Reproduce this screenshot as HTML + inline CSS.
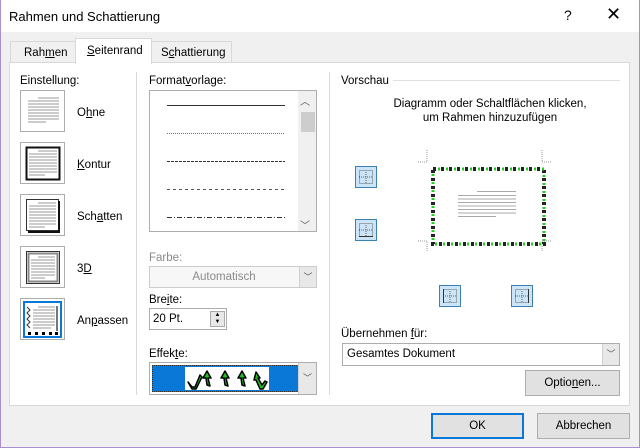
<!DOCTYPE html><html><head><meta charset="utf-8"><style>
*{box-sizing:border-box}body{margin:0;width:640px;height:448px;background:#f0f0f0;font-family:"Liberation Sans",sans-serif;font-size:11.5px;color:#000;position:relative;overflow:hidden}
.a{position:absolute}
.win{left:0;top:0;width:640px;height:448px;border:1px solid #a78fd0;border-top:none}
.tb{left:1px;top:0;width:638px;height:32px;background:#fff}
.u{text-decoration:underline}
.box{border:1px solid #adadad;background:#fff}
.ic{position:absolute;left:20px;width:45px;height:42px;border:1px solid #adadad;background:#fff}
.lbl{position:absolute;left:77px}
.dd{position:absolute;right:0;top:0;bottom:0;width:17px;background:#e8e8e8;border-left:1px solid #d0d0d0;text-align:center;color:#555;font-size:9px}
.btn{position:absolute;background:#e1e1e1;border:1px solid #adadad;text-align:center}
.sb{position:absolute;width:22px;height:22px;background:#cce4f7;border:1px solid #3c7fb1}
.sb svg{position:absolute;left:2px;top:2px}
</style></head><body>
<div class="a win"></div>
<div class="a tb"></div>
<div class="a" style="left:9px;top:9px;font-size:13px">Rahmen und Schattierung</div>
<div class="a" style="left:564px;top:7px;font-size:14px">?</div>
<div class="a" style="left:606px;top:4px;font-size:18px">✕</div>
<div class="a" style="left:10px;top:41px;width:66px;height:22px;border:1px solid #d9d9d9;border-bottom:none;background:#f0f0f0"></div>
<div class="a" style="left:24px;top:47px">Rah<span class="u">m</span>en</div>
<div class="a" style="left:151px;top:41px;width:81px;height:22px;border:1px solid #d9d9d9;border-bottom:none;background:#f0f0f0"></div>
<div class="a" style="left:161px;top:47px">S<span class="u">c</span>hattierung</div>
<div class="a" style="left:9px;top:62px;width:621px;height:344px;background:#fff;border:1px solid #d9d9d9"></div>
<div class="a" style="left:75px;top:38px;width:77px;height:26px;background:#fff;border:1px solid #d9d9d9;border-bottom:none"></div>
<div class="a" style="left:87px;top:45px"><span class="u">S</span>eitenrand</div>
<div class="a" style="left:20px;top:75px">Einstellung:</div>
<div class="a" style="left:136px;top:72px;width:1px;height:323px;background:#d9d9d9"></div>
<div class="a" style="left:329px;top:72px;width:1px;height:323px;background:#d9d9d9"></div>
<div class="ic" style="top:90px"><svg width="43" height="40"><g stroke="#999" stroke-width="1"><path d="M17 7h21M7 10h31M7 13h31M7 16h31M7 19h31M7 22h31M7 25h31M7 28h31M7 31h18"/></g></svg></div>
<div class="lbl" style="top:107px">O<span class="u">h</span>ne</div>
<div class="ic" style="top:142px"><svg width="43" height="40"><rect x="5.5" y="4.5" width="33" height="32" fill="none" stroke="#111" stroke-width="2"/><g stroke="#999"><path d="M17 8h19M8 11h28M8 14h28M8 17h28M8 20h28M8 23h28M8 26h28M8 29h28M8 32h16"/></g></svg></div>
<div class="lbl" style="top:159px"><span class="u">K</span>ontur</div>
<div class="ic" style="top:194px"><svg width="43" height="40"><rect x="5.5" y="4.5" width="32" height="31" fill="none" stroke="#333"/><path d="M38 6v31H7" fill="none" stroke="#111" stroke-width="2"/><g stroke="#999"><path d="M17 8h18M8 11h27M8 14h27M8 17h27M8 20h27M8 23h27M8 26h27M8 29h27M8 32h16"/></g></svg></div>
<div class="lbl" style="top:211px">Sch<span class="u">a</span>tten</div>
<div class="ic" style="top:246px"><svg width="43" height="40"><rect x="5.5" y="4.5" width="33" height="32" fill="none" stroke="#333"/><rect x="7.5" y="6.5" width="29" height="28" fill="none" stroke="#888" stroke-width="2"/><g stroke="#999"><path d="M17 10h17M10 13h24M10 16h24M10 19h24M10 22h24M10 25h24M10 28h24M10 31h14"/></g></svg></div>
<div class="lbl" style="top:263px">3<span class="u">D</span></div>
<div class="ic" style="top:298px"><svg width="43" height="40"><rect x="3" y="3" width="37" height="35" fill="none" stroke="#0a78d7" stroke-width="2"/><path d="M6 8l3 3-3 3 3 3-3 3 3 3-3 3 3 3" fill="none" stroke="#333"/><path d="M36 7v25" stroke="#777" stroke-width="2"/><g stroke="#999"><path d="M17 8h17M12 11h22M12 14h22M12 17h22M12 20h22M12 23h22M12 26h22M12 29h18"/></g><g fill="#000"><rect x="7" y="33" width="3" height="3"/><rect x="14" y="33" width="3" height="3"/><rect x="21" y="33" width="3" height="3"/><rect x="28" y="33" width="3" height="3"/><rect x="34" y="33" width="3" height="3"/></g></svg></div>
<div class="lbl" style="top:315px">An<span class="u">p</span>assen</div>
<div class="a" style="left:149px;top:75px">Format<span class="u">v</span>orlage:</div>
<div class="a box" style="left:149px;top:90px;width:168px;height:142px"><svg width="166" height="140" style="position:absolute;left:0;top:0"><g stroke="#333" fill="none"><path d="M17 14.5h118"/><path d="M17 42.5h118" stroke-dasharray="1 1" stroke="#777"/><path d="M17 70.5h118" stroke-dasharray="3 1"/><path d="M17 98.5h118" stroke-dasharray="3 3" stroke="#555"/><path d="M17 126.5h118" stroke-dasharray="5 2 1 2"/></g></svg>
<div class="a" style="left:148px;top:0;width:18px;height:140px;background:#f0f0f0"></div>
<div class="a" style="left:151px;top:21px;width:14px;height:20px;background:#cdcdcd"></div>
<div class="a" style="left:150px;top:2px;font-size:10px;color:#555">︿</div>
<div class="a" style="left:150px;top:126px;font-size:10px;color:#555">﹀</div></div>
<div class="a" style="left:149px;top:252px;color:#8a8a8a">Farbe:</div>
<div class="a box" style="left:149px;top:266px;width:168px;height:22px;border-color:#ccc;background:#f7f7f7;color:#8a8a8a;text-align:center;line-height:20px;padding-right:18px">Automatisch<div class="dd">﹀</div></div>
<div class="a" style="left:149px;top:294px">Bre<span class="u">i</span>te:</div>
<div class="a box" style="left:149px;top:308px;width:78px;height:22px;line-height:20px;padding-left:3px">20 Pt.<div class="a" style="left:60px;top:2px;width:15px;height:16px;background:#e8e8e8;border:1px solid #aaa;font-size:6px;line-height:7px;text-align:center">▲<br>▼</div></div>
<div class="a" style="left:149px;top:348px">Effek<span class="u">t</span>e:</div>
<div class="a box" style="left:149px;top:362px;width:168px;height:33px"><div class="a" style="left:2px;top:2px;width:147px;height:27px;background:#0a78d7;border:1px dotted #333"></div><div class="a" style="left:35px;top:4px;width:84px;height:23px;background:#fff"><svg width="84" height="23"><g stroke="#000" stroke-width="1.5" fill="#2b2" stroke-linejoin="round"><path d="M3 15l4 5 3 0 5-12 2 2-6 12-4 0z"/><path d="M22 4l4 7-3 0 2 8-3-1 -1-7-3 0z"/><path d="M40 4l4 7-3 0 2 8-3-1-1-7-3 0z"/><path d="M57 4l4 7-3 0 2 8-3-1-1-7-3 0z"/><path d="M71 5l4 6-2 0 4 7 3-4 2 1-4 7-3 0-4-9-2 0z"/></g></svg></div><div class="dd" style="width:18px;line-height:31px">﹀</div></div>
<div class="a" style="left:341px;top:75px">Vorschau</div>
<div class="a" style="left:393px;top:80px;width:227px;height:1px;background:#e0e0e0"></div>
<div class="a" style="left:340px;top:97px;width:300px;text-align:center;line-height:14px">Diagramm oder Schaltflächen klicken,<br>um Rahmen hinzuzufügen</div>
<div class="sb" style="left:355px;top:166px"><svg width="16" height="16"><g stroke="#666" stroke-dasharray="1 1" fill="none"><rect x="1.5" y="1.5" width="13" height="13"/><path d="M8 1v14M1 8h14"/></g></svg></div>
<div class="sb" style="left:355px;top:219px"><svg width="16" height="16"><g stroke="#666" stroke-dasharray="1 1" fill="none"><rect x="1.5" y="1.5" width="13" height="13"/><path d="M8 1v14M1 8h14"/></g><path d="M1 14.5h14" stroke="#333"/></svg></div>
<div class="sb" style="left:439px;top:285px"><svg width="16" height="16"><g stroke="#666" stroke-dasharray="1 1" fill="none"><rect x="1.5" y="1.5" width="13" height="13"/><path d="M8 1v14M1 8h14"/></g><path d="M1.5 1v14" stroke="#333"/></svg></div>
<div class="sb" style="left:511px;top:285px"><svg width="16" height="16"><g stroke="#666" stroke-dasharray="1 1" fill="none"><rect x="1.5" y="1.5" width="13" height="13"/><path d="M8 1v14M1 8h14"/></g><path d="M14.5 1v14" stroke="#333"/></svg></div>
<svg class="a" style="left:410px;top:145px" width="150" height="110"><g stroke="#999" fill="none" stroke-dasharray="1 1"><path d="M8 17h9V5M132 5v12h9M8 96h9v10M132 106v-10h9"/></g>
<g stroke="#222" stroke-width="4" stroke-dasharray="3 5" fill="none"><rect x="23" y="24" width="111" height="75"/></g>
<g stroke="#2c2" stroke-width="3" stroke-dasharray="2 6" stroke-dashoffset="3" fill="none"><rect x="23" y="24" width="111" height="75"/></g>
<g stroke="#aaa"><path d="M67 46.5h39M48 50.5h58M48 54h58M48 57.5h58M48 61h58M48 64.5h58M48 68h58M48 71.5h38"/></g></svg>
<div class="a" style="left:341px;top:328px">Übernehmen <span class="u">f</span>ür:</div>
<div class="a box" style="left:342px;top:343px;width:278px;height:23px;line-height:21px;padding-left:4px">Gesamtes Dokument<div class="dd">﹀</div></div>
<div class="btn" style="left:525px;top:370px;width:95px;height:26px;line-height:24px">Optio<span class="u">n</span>en...</div>
<div class="btn" style="left:431px;top:413px;width:93px;height:26px;line-height:22px;border:2px solid #0a78d7">OK</div>
<div class="btn" style="left:537px;top:413px;width:93px;height:26px;line-height:24px">Abbrechen</div>
</body></html>
